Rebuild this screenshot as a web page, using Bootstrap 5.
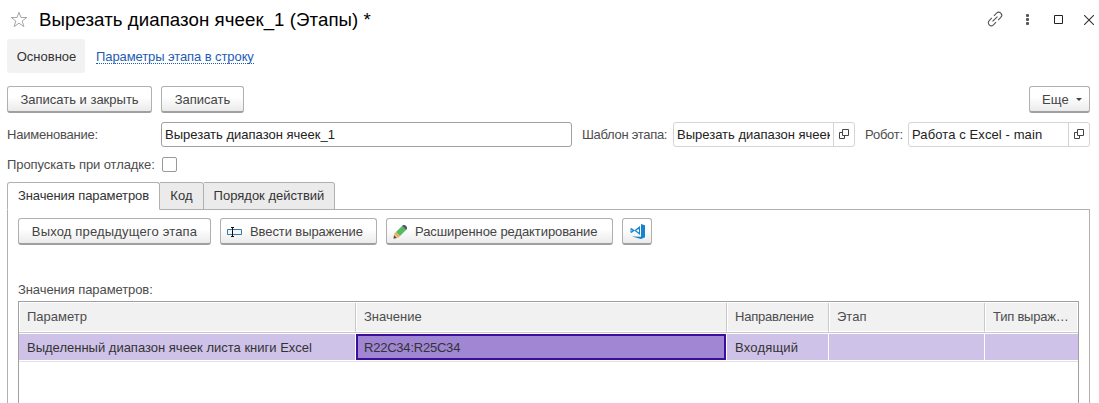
<!DOCTYPE html>
<html lang="ru">
<head>
<meta charset="utf-8">
<title>Вырезать диапазон ячеек_1 (Этапы)</title>
<link href="https://cdn.jsdelivr.net/npm/bootstrap@5.3.0/dist/css/bootstrap.min.css" rel="stylesheet">
<style>
body{font:13px/16px "Liberation Sans",Arial,sans-serif;color:#4d4d4d;background:#fff;height:403px;overflow:hidden;white-space:nowrap}
svg{display:block;flex:none}
.titlebar{height:39px;padding:0 5px 0 10px}
.titlebar h1{font-size:18.67px;line-height:22px;color:#000;margin:0 0 0 11px;font-weight:400;letter-spacing:.07px}
.nav-cur{width:78px;height:34px;background:#f2f2f2;border-radius:3px;color:#333;padding:2px 0 0 1px}
.nav-ref{color:#1f5bb5;text-decoration:none;border-bottom:1px dotted #1f5bb5;line-height:14px;height:14px;margin-top:2px}
.btn-form{--bs-btn-font-size:13px;--bs-btn-line-height:16px;--bs-btn-padding-x:0;--bs-btn-padding-y:0;--bs-btn-color:#444;--bs-btn-border-radius:3px;height:27px;border:1px solid #b0b0b0;border-bottom:2px solid #a0a0a0;background:linear-gradient(#fff 40%,#ebebeb);display:flex;align-items:center;justify-content:center;padding-top:1px}
.btn-form.with-icon{justify-content:flex-start;padding-left:6px;gap:8px}
.fields{height:25px}
.field-box{height:25px;border:1px solid #d4d4d4;border-radius:3px;color:#222;width:182px;display:flex;align-items:center}
.field-box .val{flex:1;overflow:hidden;margin:0 3px}
.field-box .pick{width:21px;height:23px;border-left:1px solid #d4d4d4;padding:6px 0 0 5px}
.field-name{width:411px;border-color:#a0a0a0}
.chk{width:15px;height:15px;border:1px solid #999;border-radius:2px}
.tabs{height:28px;position:relative;z-index:1}
.tabs .tab{height:28px;border:1px solid #b0b0b0;border-left:0;background:#ebebeb;color:#333;display:flex;align-items:center;justify-content:center;border-radius:0 3px 0 0}
.tabs .tab.active{border-left:1px solid #b0b0b0;background:#fff;border-bottom-color:#fff;border-radius:3px 3px 0 0}
.panel{margin-top:-1px;border:1px solid #b0b0b0;border-bottom:0;height:200px;padding:8px 10px 0}
.grid-box{border:1px solid #a0a0a0;border-bottom:0;height:110px;width:1061px;padding-top:1px}
.grid-row{display:grid;grid-template-columns:337px 371px 102px 156px 93px}
.grid-row>div{padding-left:8px;display:flex;align-items:center;overflow:hidden}
.grid-head{height:30px;border-bottom:1px solid #c9c9c9}
.grid-head>div{background:#f1f1f1;border:1px solid #fff;border-top:0;border-right:1px solid #c9c9c9;padding-left:7px}
.grid-head>div:last-child{border-right-color:#fff}
.grid-data{height:29px;border-bottom:1px solid #e2e2e0;padding:1px 0;color:#333}
.grid-data>div{background:#cfc2e8;border-right:1px solid #fff;padding-top:1px}
.grid-data>div:last-child{border-right:0}
.grid-data>.sel{background:#a086d3;border:2px solid #3b0f9c;padding-left:6px;margin-right:1px}
.ls-n1{letter-spacing:-.09px}
.ls-n2{letter-spacing:-.22px}
.ls-n3{letter-spacing:-.3px}
.ls-p1{letter-spacing:.1px}
.ls-p2{letter-spacing:.2px}
</style>
</head>
<body>
<header class="titlebar d-flex align-items-center">
<svg width="18" height="17" viewBox="0 0 18 17" fill="none" stroke="#a6a6a6"><path d="M9 1.300l2 5.200h5.800l-4.600 3.500 1.700 5.600L9 12.200l-4.900 3.400L5.800 10 1.200 6.500H7z"/></svg>
<h1>Вырезать диапазон ячеек_1 (Этапы) *</h1>
<div class="ms-auto d-flex align-items-center">
<svg width="18" height="18" viewBox="0 0 18 18" fill="none" stroke="#555" stroke-width="1.1" style="margin:-2px 22px 0 0"><g transform="rotate(-45 9 9)"><path d="M7.500 6H3.800a3 3 0 0 0 0 6h3.700M10.500 6h3.700a3 3 0 0 1 0 6h-3.700M5.500 9h7"/></g></svg>
<svg width="3" height="11" viewBox="0 0 3 11" fill="#555" style="margin-right:25px"><rect width="3" height="3" rx="1"/><rect y="4" width="3" height="3" rx="1"/><rect y="8" width="3" height="3" rx="1"/></svg>
<svg width="9" height="9" viewBox="0 0 9 9" fill="none" stroke="#222" style="margin-right:21px"><path d="M.5.5h8v8h-8z"/></svg>
<svg width="10" height="10" viewBox="0 0 10 10" fill="none" stroke="#333" stroke-width="1.1"><path d="M0 0l10 10M10 0L0 10"/></svg>
</div>
</header>
<nav class="d-flex align-items-center" style="padding-left:7px;gap:11px"><span class="nav-cur d-flex align-items-center justify-content-center">Основное</span><a class="nav-ref ls-n1" href="#">Параметры этапа в строку</a></nav>
<main style="padding:13px 9px 0 7px">
<div class="d-flex" style="gap:9px"><button class="btn btn-form" style="width:145px">Записать и закрыть</button><button class="btn btn-form" style="width:83px">Записать</button>
<button class="btn btn-form ms-auto ls-p2" style="width:61px;gap:7px;padding-left:5px">Еще<svg width="6" height="3" viewBox="0 0 6 3"><path d="M0 0h6L3 3z" fill="#444"/></svg></button></div>
<div class="fields d-flex align-items-center" style="margin-top:9px">
<label class="ls-n2" style="width:154px">Наименование:</label><div class="field-box field-name"><span class="val">Вырезать диапазон ячеек_1</span></div>
<label class="ls-n3" style="width:101px;padding-left:10px">Шаблон этапа:</label><div class="field-box"><span class="val">Вырезать диапазон ячеек</span><span class="pick"><svg width="10" height="10" viewBox="0 0 10 10" fill="none" stroke="#444"><path d="M3.500.5h6v6h-6zM3 3.500H.5v6h5V7"/></svg></span></div>
<label class="ls-n2" style="width:53px;padding-left:10px">Робот:</label><div class="field-box"><span class="val ls-p1">Работа с Excel - main</span><span class="pick"><svg width="10" height="10" viewBox="0 0 10 10" fill="none" stroke="#444"><path d="M3.500.5h6v6h-6zM3 3.500H.5v6h5V7"/></svg></span></div>
</div>
<div class="d-flex align-items-center" style="margin-top:10px;height:15px"><label class="ls-n1" style="width:155px">Пропускать при отладке:</label><span class="chk"></span></div>
<div class="tabs d-flex" style="margin-top:10px"><div class="tab active ls-n1" style="width:153px">Значения параметров</div><div class="tab ls-p2" style="width:44px">Код</div><div class="tab" style="width:131px">Порядок действий</div></div>
<section class="panel">
<div class="d-flex" style="gap:9px">
<button class="btn btn-form" style="width:193px;letter-spacing:.17px">Выход предыдущего этапа</button>
<button class="btn btn-form with-icon ls-n1" style="width:157px"><svg width="15" height="12" viewBox="0 0 15 12" fill="none"><path d="M.5 3.500h14v5H.5z" stroke="#3c78a0" fill="#eef6fb"/><path d="M5.500 1v10M4 1.500h3M4 10.500h3" stroke="#111"/></svg>Ввести выражение</button>
<button class="btn btn-form with-icon ls-n1" style="width:227px"><svg width="14" height="14" viewBox="0 0 14 14"><path d="M1 9l4 4 2-2-4-4z" fill="#efb04d"/><path d="M3 7l6-6 4 4-6 6z" fill="#57b960"/><path d="M9 1l1-1h2l2 2v2l-1 1z" fill="#4d5b70"/><path d="M1 10l3 3-3.500.8z" fill="#5a4a35"/></svg>Расширенное редактирование</button>
<button class="btn btn-form" style="width:30px"><svg width="15" height="15" viewBox="0 0 15 15" fill="#1683cf"><path d="M11 0l4 1.300v12L11 15l-9-2.500 9 .3z"/><path d="M10 2v9L4.500 6.700 1.500 9 .5 8.500v-4l1-.5 3 2.300zM9 5L6 6.500 9 8.500zM1.500 5.500v2l1-1z" fill-rule="evenodd"/></svg></button>
</div>
<div class="ls-n1" style="margin-top:37px;height:19px">Значения параметров:</div>
<div class="grid-box">
<div class="grid-row grid-head"><div>Параметр</div><div>Значение</div><div class="ls-n2">Направление</div><div>Этап</div><div class="ls-n2">Тип выраж…</div></div>
<div class="grid-row grid-data"><div>Выделенный диапазон ячеек листа книги Excel</div><div class="sel ls-n2">R22C34:R25C34</div><div class="ls-p2">Входящий</div><div></div><div></div></div>
</div>
</section>
</main>
<script src="https://cdn.jsdelivr.net/npm/bootstrap@5.3.0/dist/js/bootstrap.bundle.min.js"></script>
</body>
</html>
